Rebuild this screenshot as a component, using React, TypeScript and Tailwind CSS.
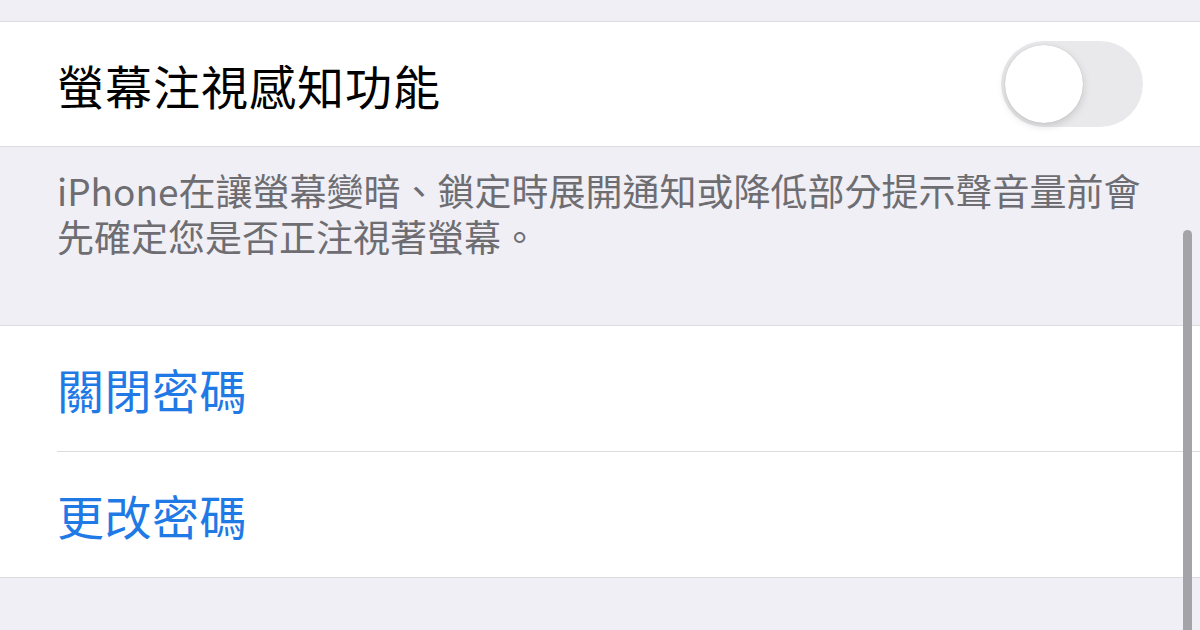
import React from "react";

const font = { fontFamily: '"Noto Sans CJK TC", "Noto Sans", sans-serif' };

export default function App() {
  return (
    <div
      className="relative w-[1200px] h-[630px] overflow-hidden bg-[#f0eff5]"
      style={font}
    >
      <div className="h-[22px] border-b border-[#dcdce0]" />
      <div className="h-[124px] bg-white flex items-center justify-between pl-[57px] pr-[57px]">
        <span className="text-[47px] leading-none text-black tracking-[1px]">
          螢幕注視感知功能
        </span>
        <div className="relative w-[142px] h-[86px] rounded-full bg-[#e9e9eb]">
          <div className="absolute left-[4px] top-[4px] w-[78px] h-[78px] rounded-full bg-white shadow-[0_3px_8px_rgba(0,0,0,0.15),0_0_1px_rgba(0,0,0,0.2)]" />
        </div>
      </div>
      <div className="h-[180px] border-t border-b border-[#dcdce0] pl-[57px] pt-[20px]">
        <p className="text-[37px] leading-[46px] text-[#6d6d72] whitespace-nowrap">
          iPhone在讓螢幕變暗、鎖定時展開通知或降低部分提示聲音量前會
          <br />
          先確定您是否正注視著螢幕。
        </p>
      </div>
      <div className="bg-white border-b border-[#dcdce0]">
        <div className="h-[125px] flex items-center pl-[57px]">
          <span className="text-[47px] leading-none text-[#1f7ae6] tracking-[0.5px]">
            關閉密碼
          </span>
        </div>
        <div className="ml-[57px] h-px bg-[#dcdce0]" />
        <div className="h-[125px] flex items-center pl-[57px]">
          <span className="text-[47px] leading-none text-[#1f7ae6] tracking-[0.5px]">
            更改密碼
          </span>
        </div>
      </div>
      <div className="absolute left-[1183px] top-[230px] w-[9px] h-[420px] rounded-full bg-[#a3a3a8]" />
    </div>
  );
}
